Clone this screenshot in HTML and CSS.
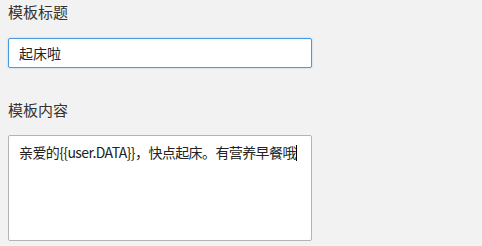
FILE: index.html
```html
<!DOCTYPE html>
<html lang="zh-CN">
<head>
<meta charset="utf-8">
<link rel="stylesheet" href="styles.css">
</head>
<body>
<div class="form">
  <div class="label">模板标题</div>
  <input class="title-input" type="text" value="起床啦">
  <div class="label label-second">模板内容</div>
  <div class="content-box">亲爱的{{user.DATA}}，快点起床。有营养早餐哦<span class="caret"></span></div>
</div>
</body>
</html>
```
FILE: styles.css
```css
html, body {
  margin: 0;
  padding: 0;
  background: #f2f2f2;
}
body {
  width: 482px;
  height: 246px;
  overflow: hidden;
  font-family: "Noto Sans CJK SC", "Noto Sans", sans-serif;
  color: #222;
}
.form {
  display: flex;
  flex-direction: column;
  padding: 0 0 0 8px;
  width: 304px;
}
.label {
  font-size: 15px;
  line-height: 24px;
  height: 24px;
  color: #333;
}
.title-input {
  box-sizing: border-box;
  margin: 14px 0 0 0;
  width: 304px;
  height: 30px;
  border: 1px solid #4a9ae0;
  border-radius: 2px;
  box-shadow: 0 0 2px rgba(74, 154, 224, 0.45);
  background: #fff;
  padding: 0 10px;
  font-family: "Noto Sans CJK SC", "Noto Sans", sans-serif;
  font-size: 14px;
  color: #222;
  outline: none;
}
.label-second {
  margin-top: 30px;
}
.content-box {
  box-sizing: border-box;
  margin-top: 13px;
  width: 304px;
  height: 106px;
  border: 1px solid #b4b4b4;
  border-radius: 2px;
  background: #fff;
  padding: 6px 10px;
  font-size: 14px;
  line-height: 20px;
  letter-spacing: -0.6px;
  color: #222;
  white-space: nowrap;
}
.caret {
  display: inline-block;
  width: 1px;
  height: 16px;
  background: #000;
  vertical-align: -3px;
}
```
